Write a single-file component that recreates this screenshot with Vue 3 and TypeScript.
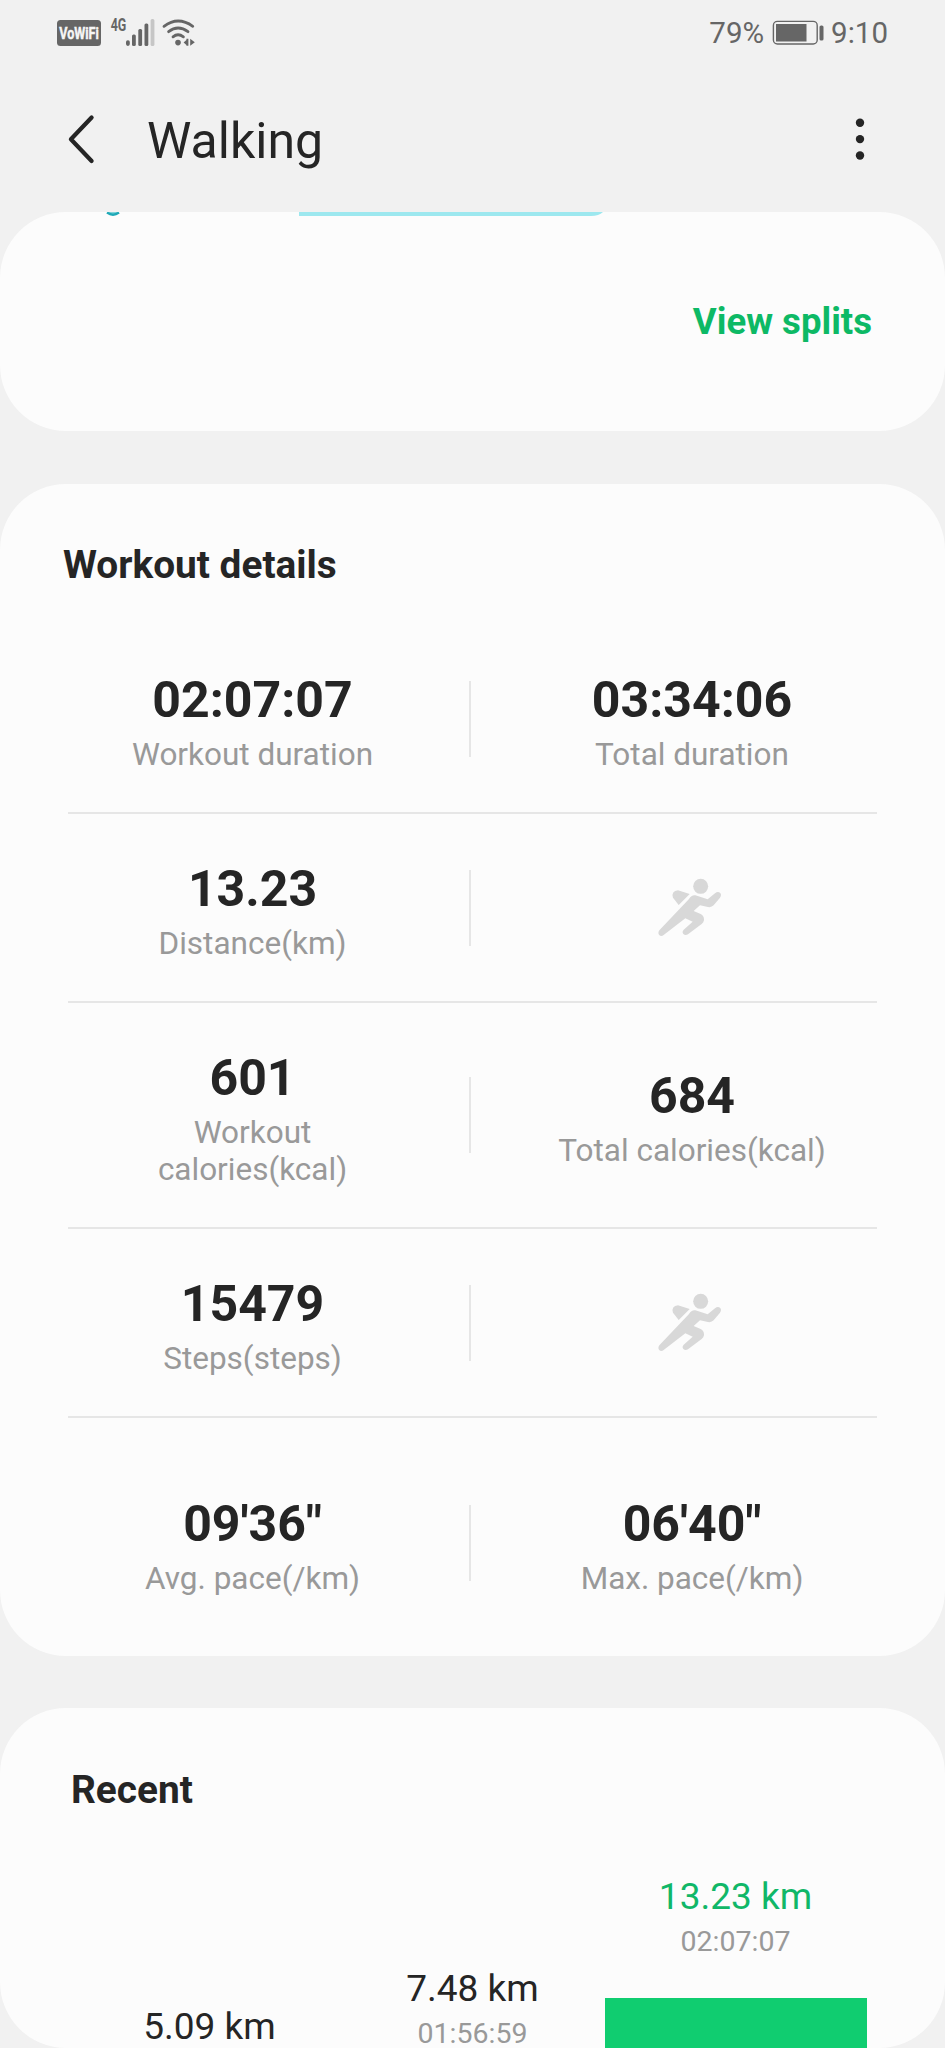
<script setup lang="ts">
interface Metric {
  value?: string
  label?: string
}

interface RecentWorkout {
  distance: string
  time?: string
  labelOffset: number
  current?: boolean
}

const rows: [Metric, Metric][] = [
  [
    { value: '02:07:07', label: 'Workout duration' },
    { value: '03:34:06', label: 'Total duration' },
  ],
  [{ value: '13.23', label: 'Distance(km)' }, {}],
  [
    { value: '601', label: 'Workout calories(kcal)' },
    { value: '684', label: 'Total calories(kcal)' },
  ],
  [{ value: '15479', label: 'Steps(steps)' }, {}],
  [
    { value: '09\'36"', label: 'Avg. pace(/km)' },
    { value: '06\'40"', label: 'Max. pace(/km)' },
  ],
]

const recent: RecentWorkout[] = [
  { distance: '5.09 km', labelOffset: 130 },
  { distance: '7.48 km', time: '01:56:59', labelOffset: 92 },
  { distance: '13.23 km', time: '02:07:07', labelOffset: 0, current: true },
]
</script>

<template>
  <div class="screen">
    <div class="status">
      <svg class="status-left" width="140" height="32" viewBox="57 17 140 32">
        <rect x="57" y="20" width="44" height="26" rx="3.5" fill="#666" />
        <text x="59.3" y="38.8" class="vowifi" textLength="39.5" lengthAdjust="spacingAndGlyphs">VoWiFi</text>
        <text x="110.7" y="31.3" class="net" textLength="15.6" lengthAdjust="spacingAndGlyphs">4G</text>
        <g fill="#666">
          <rect x="126" y="40.3" width="3.8" height="5.6" rx="1.8" />
          <rect x="132" y="34.5" width="3.8" height="11.4" rx="1.5" />
          <rect x="138.3" y="29" width="3.8" height="16.9" rx="1.5" />
          <rect x="144.5" y="23.5" width="3.8" height="22.4" rx="1.5" />
          <rect x="150.6" y="19" width="3.8" height="26.9" rx="1.5" fill="#c6c6c6" />
          <circle cx="178" cy="42.6" r="2.8" />
          <path d="M183.6 42.5L186.4 40V38.8H188.4V45.8H186.4V45Z" />
          <path d="M190.2 38.8L194.8 42.3L190.2 45.8Z" />
        </g>
        <g fill="none" stroke="#666" stroke-width="2.8" stroke-linecap="round">
          <path d="M164 26.3Q178 15.8 192.8 26.3" />
          <path d="M168.6 31.7Q178 24.3 188 31.7" />
          <path d="M173 36.8Q178 32.8 183.4 36.8" />
        </g>
      </svg>
      <div class="status-right">
        <span>79%</span>
        <svg class="battery" width="52" height="26" viewBox="772 20 52 26">
          <rect x="773.4" y="21.4" width="43.8" height="22.6" rx="4" fill="none" stroke="#666" stroke-width="1.4" />
          <rect x="776" y="24" width="30.5" height="17.5" fill="#666" />
          <rect x="819.5" y="25.5" width="4" height="15" rx="1.6" fill="#666" />
        </svg>
        <span>9:10</span>
      </div>
    </div>

    <header class="bar">
      <svg class="back" width="30" height="52" viewBox="66 113 30 52">
        <path d="M91.6 117.5L70.9 139.3L91.6 161" fill="none" stroke="#252525" stroke-width="4.2" stroke-linecap="round" stroke-linejoin="round" />
      </svg>
      <h1>Walking</h1>
      <svg class="more" width="12" height="44" viewBox="854 117 12 44" fill="#252525">
        <circle cx="860" cy="122.7" r="4.2" />
        <circle cx="860" cy="139.1" r="4.2" />
        <circle cx="860" cy="155.5" r="4.2" />
      </svg>
    </header>

    <section class="card splits">
      <svg class="peek" width="520" height="5" viewBox="100 212 520 5">
        <path d="M106 211.5Q113 217.5 120 211.5" fill="#7fd3da" />
        <path d="M107 212.6Q113 216.8 119 212.6" fill="none" stroke="#1fa9b7" stroke-width="2.4" />
        <path d="M299 212H603Q599 216 591 216H299Z" fill="#9de8ef" />
      </svg>
      <a class="view">View splits</a>
    </section>

    <section class="card details">
      <h2>Workout details</h2>
      <div v-for="(row, i) in rows" :key="i" class="row" :class="{ tall: i === 2, last: i === 4 }">
        <template v-for="(m, j) in row" :key="j">
          <div v-if="j === 1" class="split" />
          <div class="cell">
            <template v-if="m.value">
              <div class="value">{{ m.value }}</div>
              <div class="label">{{ m.label }}</div>
            </template>
            <svg v-else class="runner" width="64" height="59" viewBox="595 713 192 177" fill="#d8d8d8">
              <circle cx="723" cy="738" r="22.5" />
              <path d="M655 750L690 761L657 794L640 772Q634 752 655 750Z" />
              <path d="M707 765L744 777L766 759Q774 752 781 757Q787 763 781 772L762 795Q755 802 745 800L721 795L702 812L723 821Q734 827 733 840Q732 846 726 851L685 882Q677 887 671 881Q666 875 672 868L699 844L677 834L612 884Q604 890 598 883Q594 877 599 870L688 776Q696 763 707 765Z" />
            </svg>
          </div>
        </template>
      </div>
    </section>

    <section class="card recent">
      <h2>Recent</h2>
      <div class="chart">
        <div v-for="w in recent" :key="w.distance" class="col" :class="{ current: w.current }" :style="{ paddingTop: w.labelOffset + 'px' }">
          <div class="dist">{{ w.distance }}</div>
          <div v-if="w.time" class="time">{{ w.time }}</div>
          <div v-if="w.time" class="fill" />
        </div>
      </div>
    </section>
  </div>
</template>

<style>
html,
body {
  margin: 0;
  background: #f1f1f1;
}
</style>

<style scoped>
.screen {
  width: 945px;
  height: 2048px;
  overflow: hidden;
  background: #f1f1f1;
  color: #252525;
  font-family: Roboto, sans-serif;
  display: flex;
  flex-direction: column;
}
svg {
  display: block;
  flex: none;
}
h1,
h2 {
  margin: 0;
}
.status {
  height: 66px;
  box-sizing: border-box;
  padding: 17px 57px 0;
  display: flex;
  justify-content: space-between;
  align-items: flex-start;
  flex: none;
}
.status-left {
  overflow: visible;
}
.vowifi {
  font: 700 17px Roboto, sans-serif;
  fill: #f6f6f6;
  stroke: #f6f6f6;
  stroke-width: 0.5px;
}
.net {
  font: 700 17.5px Roboto, sans-serif;
  fill: #666;
}
.status-right {
  display: flex;
  color: #666;
  font-size: 29.5px;
  line-height: 33px;
}
.battery {
  margin: 3px 7px 0 8px;
}
.bar {
  height: 146px;
  flex: none;
  display: flex;
  align-items: center;
  padding: 0 79px 0 66px;
}
.back {
  margin-right: 51px;
}
h1 {
  font-size: 50px;
  font-weight: 400;
  line-height: 60px;
  flex: 1;
  padding-top: 4px;
}
.card {
  background: #fcfcfc;
  border-radius: 66px;
  overflow: hidden;
  flex: none;
}
.splits {
  height: 219px;
  margin-bottom: 53px;
}
.peek {
  margin-left: 100px;
}
.view {
  display: block;
  text-align: right;
  padding: 83px 73px 0 0;
  font-size: 36.6px;
  line-height: 44px;
  font-weight: 700;
  color: #0db965;
}
.details {
  height: 1172px;
  margin-bottom: 52px;
}
h2 {
  font-size: 38.8px;
  font-weight: 700;
  line-height: 48px;
}
.details h2 {
  padding: 57px 0 36px 63px;
}
.row {
  height: 187px;
  display: grid;
  grid-template-columns: 433px 2px 442px;
  align-items: center;
  padding-left: 36px;
  position: relative;
}
.row:not(.last)::after {
  content: '';
  position: absolute;
  left: 68px;
  top: 100%;
  width: 809px;
  height: 2px;
  background: #e6e6e6;
}
.row:not(.last) {
  margin-bottom: 2px;
}
.row.tall {
  height: 224px;
}
.row.last {
  margin-top: 33px;
}
.split {
  height: 76px;
  background: #e6e6e6;
}
.cell {
  display: flex;
  flex-direction: column;
  align-items: center;
  text-align: center;
}
.value {
  font-size: 50px;
  line-height: 59px;
  font-weight: 700;
  padding-top: 6px;
}
.label {
  margin-top: 6px;
  max-width: 290px;
  font-size: 31.5px;
  line-height: 37px;
  color: #999;
}
.runner {
  margin-right: 4px;
}
.recent {
  height: 340px;
}
.recent h2 {
  padding: 58px 0 61px 71px;
}
.chart {
  height: 173px;
  padding-left: 78px;
  display: grid;
  grid-template-columns: repeat(3, 263px);
}
.col {
  display: flex;
  flex-direction: column;
  align-items: center;
}
.dist {
  font-size: 37px;
  line-height: 44px;
}
.time {
  margin-top: 6px;
  font-size: 28.5px;
  line-height: 34px;
  color: #999;
}
.fill {
  margin-top: 39px;
  width: 262px;
  height: 300px;
  background: #10cd70;
}
.current .dist {
  color: #10b768;
}
</style>
